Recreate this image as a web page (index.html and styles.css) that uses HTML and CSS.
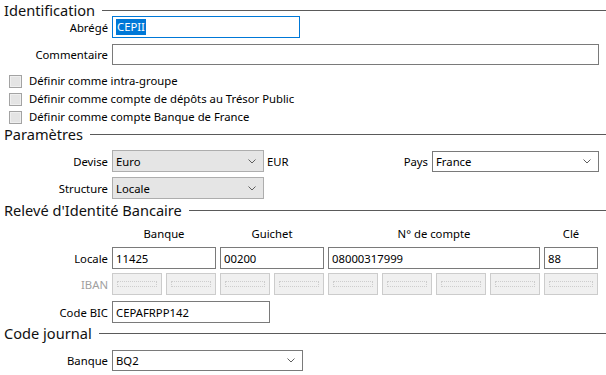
FILE: index.html
```html
<!DOCTYPE html>
<html lang="fr">
<head>
<meta charset="utf-8">
<link rel="stylesheet" href="styles.css">
</head>
<body>
<div class="form">
  <div class="sec-head h-ident"><span class="sec-title">Identification</span></div>
  <div class="row r-abrege">
    <span class="lbl">Abrégé</span>
    <div class="field focus w-abrege"><span class="selected">CEPII</span></div>
  </div>
  <div class="row r-comment">
    <span class="lbl">Commentaire</span>
    <div class="field grow"></div>
  </div>
  <div class="checks">
    <div class="check"><span class="box"></span><span class="ctext">Définir comme intra-groupe</span></div>
    <div class="check"><span class="box"></span><span class="ctext">Définir comme compte de dépôts au Trésor Public</span></div>
    <div class="check"><span class="box"></span><span class="ctext">Définir comme compte Banque de France</span></div>
  </div>

  <div class="sec-head"><span class="sec-title">Paramètres</span></div>
  <div class="row r-devise">
    <span class="lbl">Devise</span>
    <div class="select grey w-devise"><span>Euro</span><svg class="chev" width="8" height="5" viewBox="0 0 8 5"><polyline points="0.5,0.5 4,4 7.5,0.5"/></svg></div>
    <span class="code">EUR</span>
    <span class="spacer"></span>
    <span class="lbl-inline">Pays</span>
    <div class="select white w-pays"><span>France</span><svg class="chev" width="8" height="5" viewBox="0 0 8 5"><polyline points="0.5,0.5 4,4 7.5,0.5"/></svg></div>
  </div>
  <div class="row r-struct">
    <span class="lbl">Structure</span>
    <div class="select grey w-devise"><span>Locale</span><svg class="chev" width="8" height="5" viewBox="0 0 8 5"><polyline points="0.5,0.5 4,4 7.5,0.5"/></svg></div>
  </div>

  <div class="sec-head h-rib"><span class="sec-title">Relevé d'Identité Bancaire</span></div>
  <div class="rib">
    <span></span>
    <span class="colhead s2">Banque</span>
    <span class="colhead s2">Guichet</span>
    <span class="colhead s4">N° de compte</span>
    <span class="colhead s1">Clé</span>

    <span class="lbl">Locale</span>
    <div class="field s2">11425</div>
    <div class="field s2">00200</div>
    <div class="field s4">08000317999</div>
    <div class="field s1">88</div>

    <span class="lbl disabled">IBAN</span>
    <div class="iban"><span></span></div>
    <div class="iban"><span></span></div>
    <div class="iban"><span></span></div>
    <div class="iban"><span></span></div>
    <div class="iban"><span></span></div>
    <div class="iban"><span></span></div>
    <div class="iban"><span></span></div>
    <div class="iban"><span></span></div>
    <div class="iban"><span></span></div>
  </div>
  <div class="row r-bic">
    <span class="lbl">Code BIC</span>
    <div class="field w-bic">CEPAFRPP142</div>
  </div>

  <div class="sec-head h-journal"><span class="sec-title">Code journal</span></div>
  <div class="row r-banque">
    <span class="lbl">Banque</span>
    <div class="select white w-banque"><span>BQ2</span><svg class="chev" width="8" height="5" viewBox="0 0 8 5"><polyline points="0.5,0.5 4,4 7.5,0.5"/></svg></div>
  </div>
</div>
</body>
</html>
```

FILE: styles.css
```css
* { box-sizing: border-box; }

html, body {
  margin: 0;
  padding: 0;
  background: #ffffff;
}

body {
  width: 606px;
  height: 375px;
  overflow: hidden;
  font-family: "Noto Sans", "Open Sans", sans-serif;
  font-size: 11.3px;
  color: #000000;
}

.form {
  display: flex;
  flex-direction: column;
}

/* section headings */
.sec-head {
  display: flex;
  align-items: flex-start;
  height: 16px;
  padding-left: 4px;
}
.sec-title {
  font-size: 14.6px;
  line-height: 20px;
  color: #111111;
  white-space: nowrap;
}
.sec-head::after {
  content: "";
  flex: 1;
  margin-top: 10px;
  margin-left: 7px;
  border-top: 1px solid #5a5a5a;
}

/* rows */
.row {
  display: flex;
  align-items: center;
  gap: 4px;
  padding-right: 7px;
}
.lbl {
  width: 108px;
  flex: none;
  text-align: right;
  white-space: nowrap;
}
.lbl.disabled { color: #a0a0a0; }
.lbl-inline { white-space: nowrap; }

.field {
  height: 22px;
  border: 1px solid #7a7a7a;
  background: #ffffff;
  display: flex;
  align-items: center;
  padding: 0 3px;
  white-space: nowrap;
}
.field.focus { border-color: #0078d7; }
.field.grow { flex: 1; height: 21px; }
.selected {
  background: #0078d7;
  color: #ffffff;
  padding: 0 1px;
  line-height: 16px;
}

.w-abrege { width: 188px; }
.r-abrege { margin-top: 0; }
.r-comment { margin-top: 6px; }

/* checkboxes */
.checks {
  display: flex;
  flex-direction: column;
  gap: 5px;
  margin-top: 10px;
  padding-left: 9px;
}
.check {
  display: flex;
  align-items: center;
  height: 13px;
  gap: 7px;
}
.box {
  width: 13px;
  height: 13px;
  border: 1px solid #a3a3a3;
  background: #e4e4e4;
  box-shadow: inset 0 0 0 1px #efefef;
  flex: none;
}
.ctext {
  line-height: 13px;
  margin-top: -2px;
  white-space: nowrap;
}

/* selects */
.select {
  height: 22px;
  display: flex;
  align-items: center;
  justify-content: space-between;
  padding: 0 7px 0 3px;
  white-space: nowrap;
}
.select.grey {
  background: #e5e5e5;
  border: 1px solid #adadad;
}
.select.white {
  background: #ffffff;
  border: 1px solid #7a7a7a;
  height: 21px;
}
.chev polyline {
  fill: none;
  stroke: #5f5f5f;
  stroke-width: 1;
}
.w-devise { width: 152px; }
.w-pays { width: 167px; }
.w-banque { width: 191px; }
.code { margin-left: -1px; }
.spacer { flex: 1; }
.r-devise { margin-top: 10px; }
.r-devise .select.white { margin-top: 1px; }
.r-struct { margin-top: 5px; }
.h-rib { margin-top: 1px; }

/* RIB grid */
.rib {
  display: grid;
  grid-template-columns: 108px repeat(8, 50px) 54px;
  grid-template-rows: 17px 22px 22px;
  column-gap: 4px;
  row-gap: 4px;
  margin-top: 10px;
  align-items: center;
}
.rib .field { height: 22px; }
.colhead {
  text-align: center;
  align-self: start;
  line-height: 16px;
}
.s1 { grid-column: span 1; }
.s2 { grid-column: span 2; }
.s4 { grid-column: span 4; }

.iban {
  height: 22px;
  border: 1px solid #cccccc;
  background: #f0f0f0;
  padding: 7px 4px;
  display: flex;
}
.iban span {
  flex: 1;
  border: 1px dotted #cdcdcd;
}

.r-bic { margin-top: 6px; }
.w-bic { width: 158px; }

.h-journal { margin-top: 0; }
.r-banque { margin-top: 11px; }
```
